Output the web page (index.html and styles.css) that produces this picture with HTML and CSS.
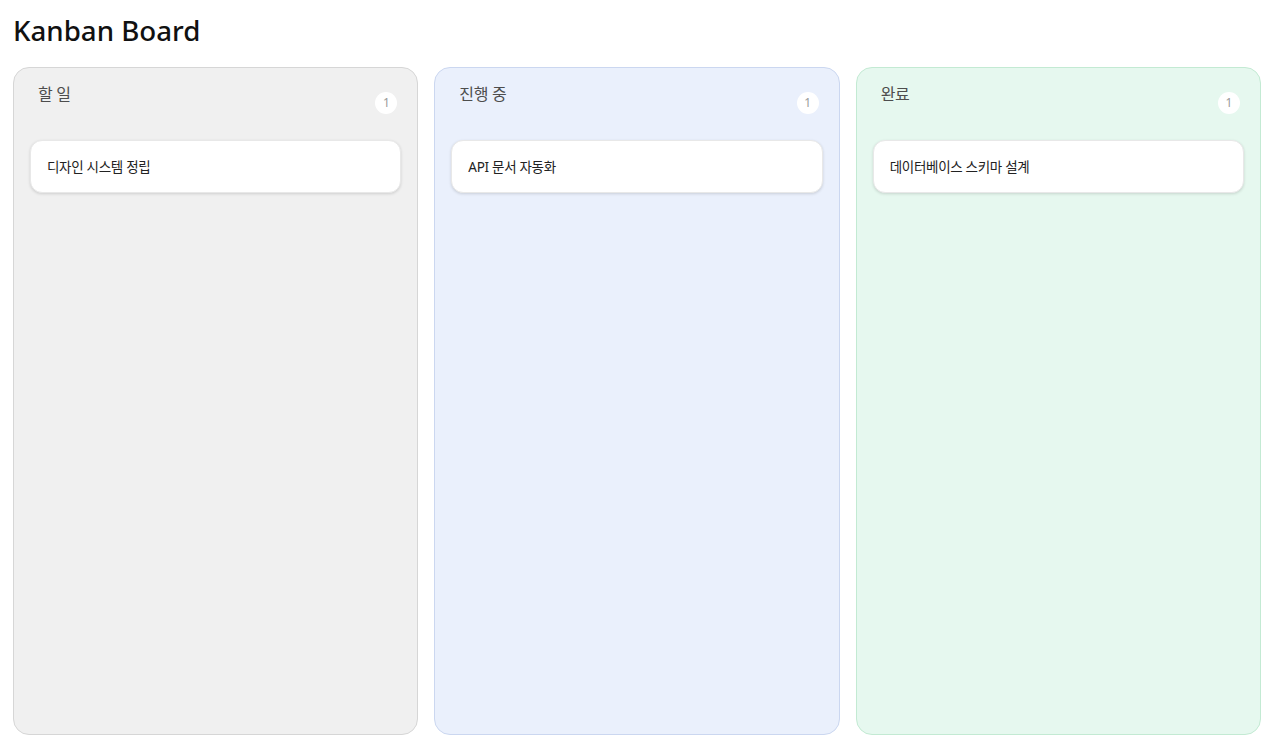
FILE: index.html
```html
<!DOCTYPE html>
<html lang="ko">
<head>
<meta charset="utf-8">
<title>Kanban Board</title>
<link rel="stylesheet" href="styles.css">
</head>
<body>
<div class="page">
  <h1 class="title">Kanban Board</h1>
  <div class="board">
    <section class="column column-todo">
      <header class="column-header">
        <h2 class="column-title">할 일</h2>
        <span class="badge">1</span>
      </header>
      <div class="card">디자인 시스템 정립</div>
    </section>
    <section class="column column-progress">
      <header class="column-header">
        <h2 class="column-title">진행 중</h2>
        <span class="badge">1</span>
      </header>
      <div class="card">API 문서 자동화</div>
    </section>
    <section class="column column-done">
      <header class="column-header">
        <h2 class="column-title">완료</h2>
        <span class="badge">1</span>
      </header>
      <div class="card">데이터베이스 스키마 설계</div>
    </section>
  </div>
</div>
</body>
</html>
```
FILE: styles.css
```css
* { box-sizing: border-box; }
html, body { margin: 0; padding: 0; }
body {
  font-family: "Noto Sans", "Noto Sans CJK KR", sans-serif;
  background: #ffffff;
  color: #1a1a1a;
}
.page {
  height: 100vh;
  display: flex;
  flex-direction: column;
  padding: 12px 14px 18px 13px;
}
.title {
  margin: 0 0 19px 0;
  font-size: 27.7px;
  line-height: 36px;
  height: 36px;
  font-weight: 500;
  color: #111;
}
.board {
  flex: 1;
  display: grid;
  grid-template-columns: repeat(3, 1fr);
  gap: 16px;
}
.column {
  border-radius: 16px;
  border: 1px solid #d6d6d6;
  background: #f0f0f0;
  padding: 16px;
  display: flex;
  flex-direction: column;
}
.column-progress { background: #eaf0fc; border-color: #cbd7f0; }
.column-done { background: #e6f8ef; border-color: #c3ead3; }
.column-header {
  display: flex;
  justify-content: space-between;
  align-items: flex-start;
  padding: 0 4px 0 8px;
  margin-bottom: 26px;
}
.column-title {
  margin: 0;
  font-size: 16px;
  line-height: 20px;
  font-weight: 400;
  letter-spacing: -0.3px;
  color: #4d4d4d;
}
.badge {
  margin-top: 8px;
  width: 22px;
  height: 22px;
  border-radius: 50%;
  background: #ffffff;
  color: #9a9a9a;
  font-size: 12px;
  line-height: 22px;
  text-align: center;
}
.card {
  background: #ffffff;
  border-radius: 12px;
  border: 1px solid #e8e8e8;
  box-shadow: 0 1px 3px rgba(0, 0, 0, 0.14);
  padding: 0 16px 2px;
  height: 53px;
  display: flex;
  align-items: center;
  font-size: 13.5px;
  letter-spacing: -0.3px;
  color: #222;
}
```
